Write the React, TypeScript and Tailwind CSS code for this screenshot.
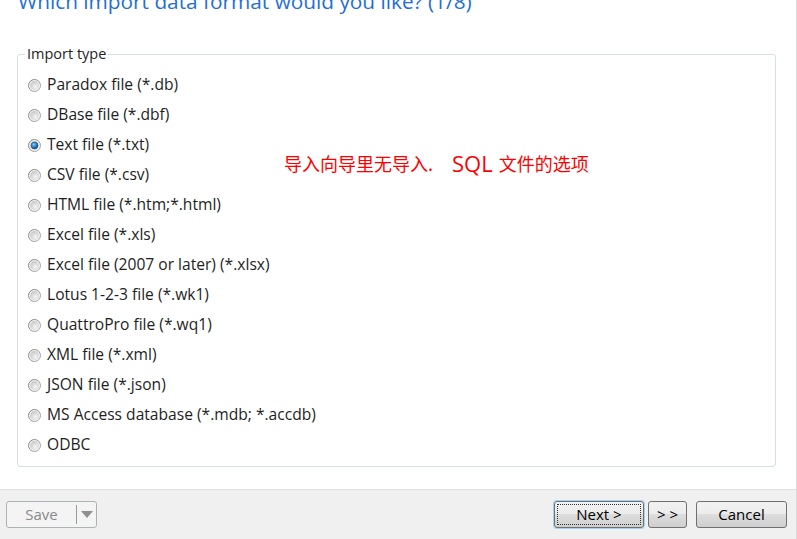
import React from "react";

const items = [
  "Paradox file (*.db)",
  "DBase file (*.dbf)",
  "Text file (*.txt)",
  "CSV file (*.csv)",
  "HTML file (*.htm;*.html)",
  "Excel file (*.xls)",
  "Excel file (2007 or later) (*.xlsx)",
  "Lotus 1-2-3 file (*.wk1)",
  "QuattroPro file (*.wq1)",
  "XML file (*.xml)",
  "JSON file (*.json)",
  "MS Access database (*.mdb; *.accdb)",
  "ODBC",
];

function Radio({ checked }: { checked: boolean }) {
  return (
    <svg width="13" height="13" viewBox="0 0 13 13" className="shrink-0">
      <defs>
        <linearGradient id="rOut" x1="0" y1="0" x2="1" y2="1">
          <stop offset="0" stopColor="#7e7e7e" />
          <stop offset="1" stopColor="#b0b0b0" />
        </linearGradient>
        <radialGradient id="rIn" cx="0.6" cy="0.65" r="0.7">
          <stop offset="0" stopColor="#f6f6f6" />
          <stop offset="1" stopColor="#c4c4c4" />
        </radialGradient>
        <radialGradient id="rDot" cx="0.4" cy="0.35" r="0.7">
          <stop offset="0" stopColor="#8fd3ff" />
          <stop offset="0.5" stopColor="#2a86cf" />
          <stop offset="1" stopColor="#0d3f73" />
        </radialGradient>
      </defs>
      <circle cx="6.5" cy="6.5" r="6" fill="#f2f2f2" stroke="url(#rOut)" strokeWidth="1" />
      <circle cx="6.5" cy="6.5" r="4.4" fill="url(#rIn)" />
      {checked && <circle cx="6.5" cy="6.5" r="3.4" fill="url(#rDot)" stroke="#1d4a78" strokeWidth="0.6" />}
    </svg>
  );
}

const btn =
  "h-[27px] rounded-[3px] border border-[#707070] bg-[linear-gradient(to_bottom,#f2f2f2_0%,#ebebeb_50%,#dddddd_50%,#cfcfcf_100%)] text-[15px] text-black flex items-center justify-center";

export default function App() {
  return (
    <div
      className="w-[797px] h-[539px] flex flex-col bg-white overflow-hidden border-r border-[#dcdcdc] relative"
      style={{ fontFamily: "'Open Sans', 'Noto Sans', sans-serif" }}
    >
      <div className="flex-1 flex flex-col pl-[17px] pr-[20px]">
        <div className="mt-[-12px] h-[29px] pl-[1px] text-[20.8px] leading-[26px] text-[#1f6fd6] whitespace-nowrap">
          Which import data format would you like? (1/8)
        </div>
        <fieldset className="relative mt-[28px] h-[422px] border border-[#d5dfe5] rounded-[3px] pl-[10px] pt-[7px]">
          <legend className="ml-[-3px] px-[2px] text-[14.5px] leading-[18px] text-[#1e1e1e]">Import type</legend>
          <div className="flex flex-col">
            {items.map((t, i) => (
              <div key={t} className="h-[30px] flex items-center gap-[6px]">
                <Radio checked={i === 2} />
                <span className="text-[15.6px] text-[#1e1e1e] whitespace-nowrap">{t}</span>
              </div>
            ))}
          </div>
          <div
            className="absolute left-[266px] top-[88px] flex items-center h-[24px] text-[18px] leading-[24px] text-[#ff0000] whitespace-nowrap"
            style={{ fontFamily: "'Noto Sans CJK SC', 'Noto Sans', sans-serif" }}
          >
            <span>导入向导里无导入</span>
            <span className="mr-[19px]">.</span>
            <span
              className="text-[22px] leading-[24px] mr-[6px]"
              style={{ fontFamily: "'Open Sans', 'Noto Sans', sans-serif" }}
            >
              SQL
            </span>
            <span>文件的选项</span>
          </div>
        </fieldset>
      </div>
      <div className="h-[50px] border-t border-[#dfdfdf] bg-[#f0f0f0] flex items-start pt-[11px] pl-[6px] pr-[9px]">
        <div className="w-[91px] h-[27px] rounded-[3px] border border-[#adb2b5] bg-[#f4f4f4] flex items-center">
          <span className="w-[69px] text-center text-[15px] text-[#8a8a8a]">Save</span>
          <span className="w-px h-[19px] bg-[#9a9a9a]" />
          <span className="flex-1 flex justify-center">
            <svg width="12" height="7" viewBox="0 0 12 7">
              <path d="M0 0 H12 L6 7 Z" fill="#8f8f8f" />
            </svg>
          </span>
        </div>
        <div className="flex-1" />
        <div className={`${btn} w-[90px] border-[#3c7fb1] shadow-[0_0_0_1px_#9fd4f7] p-[2px]`}>
          <div className="w-full h-full border border-dotted border-[#333] flex items-center justify-center rounded-[1px]">
            Next &gt;
          </div>
        </div>
        <div className={`${btn} w-[39px] ml-[4px] text-[12px]`}>&gt; &gt;</div>
        <div className={`${btn} w-[91px] ml-[9px]`}>Cancel</div>
      </div>
    </div>
  );
}
